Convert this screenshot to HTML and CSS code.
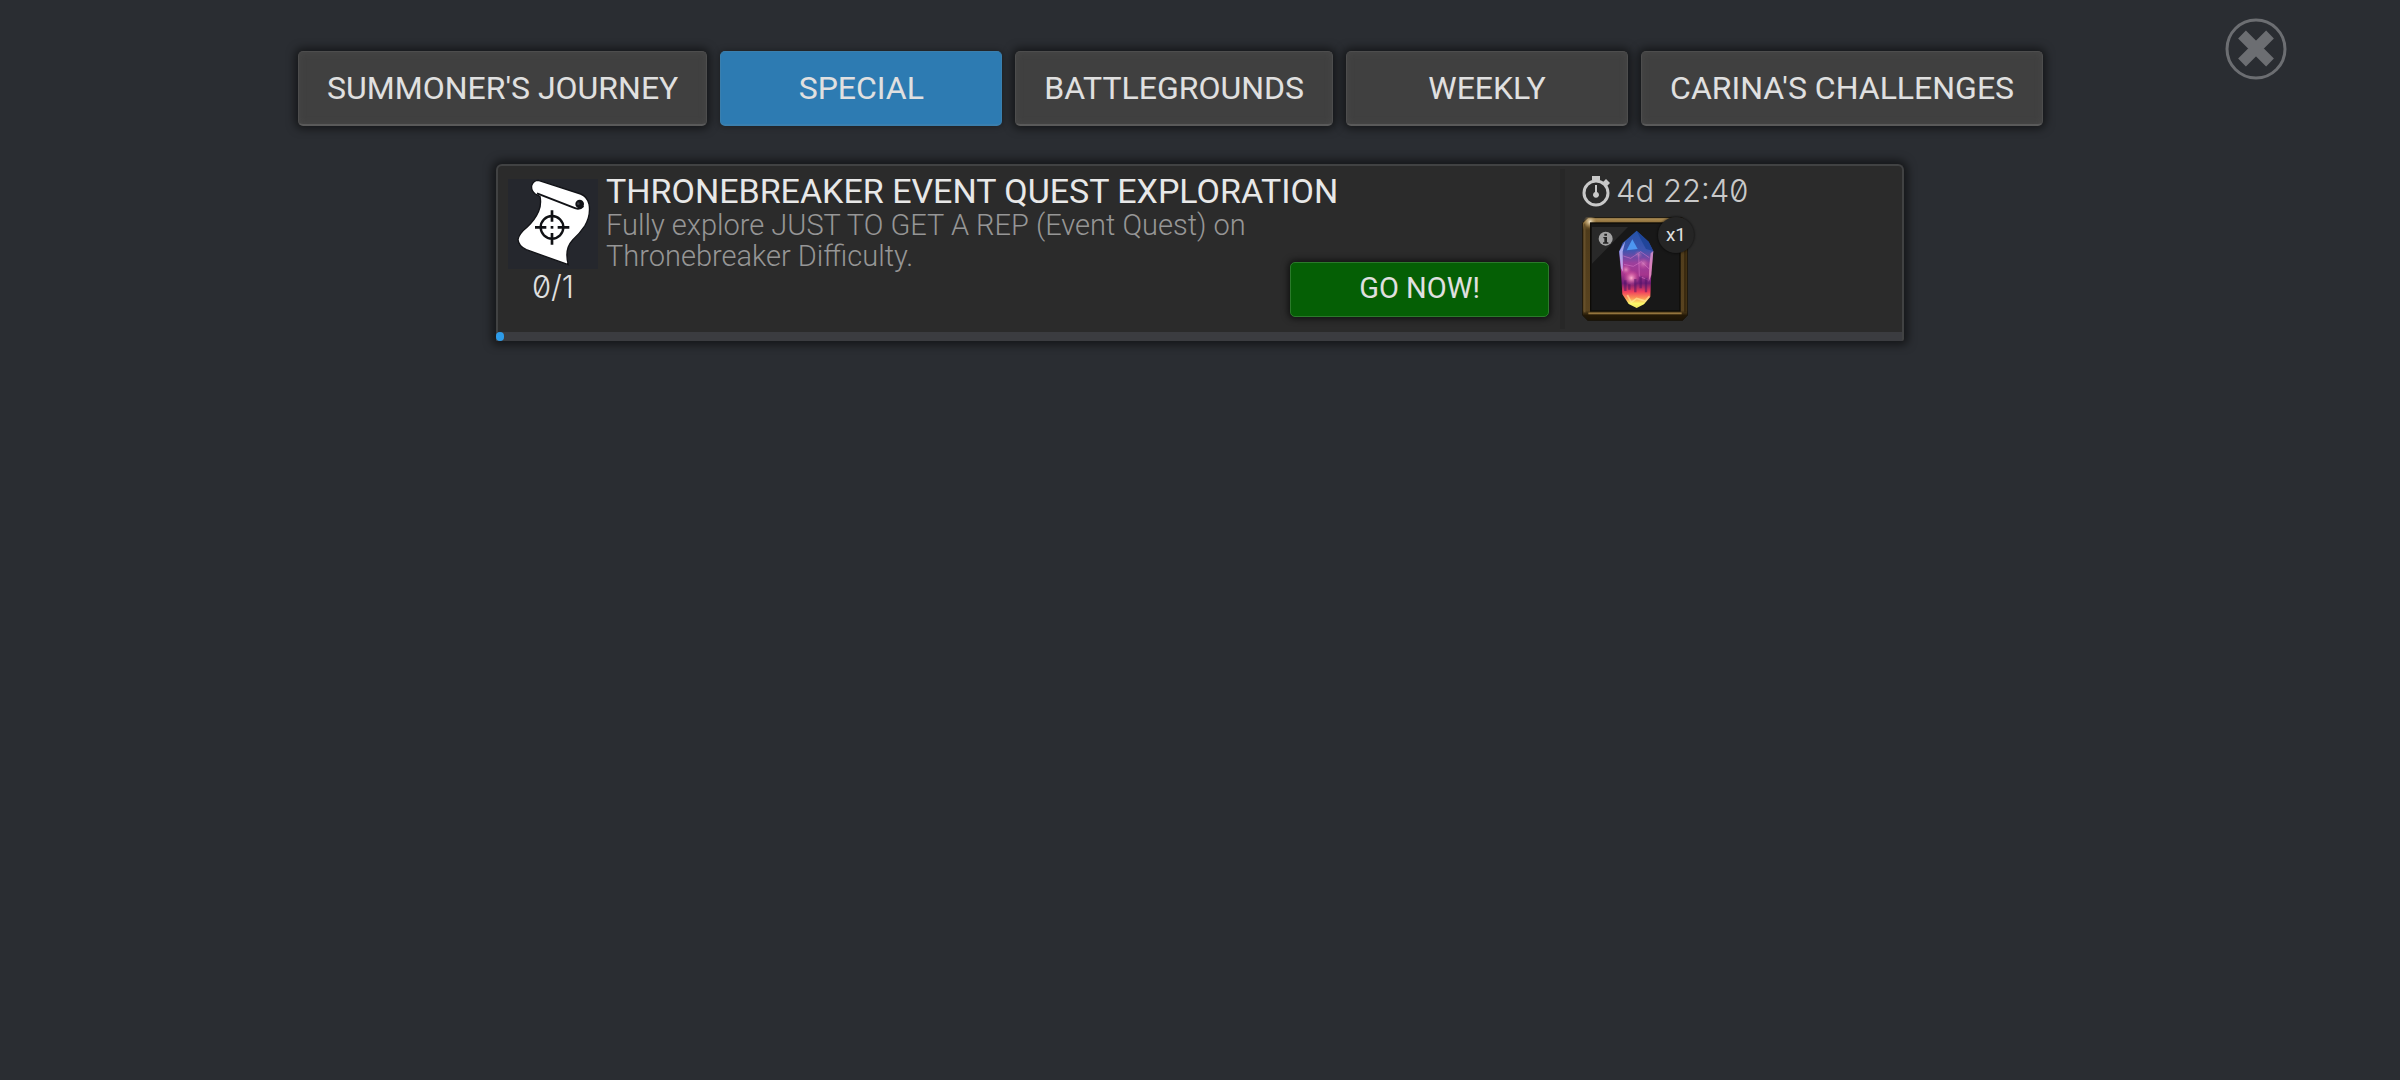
FILE: index.html
```html
<!DOCTYPE html>
<html lang="en">
<head>
<meta charset="utf-8">
<meta name="viewport" content="width=device-width, initial-scale=1">
<title>Objectives</title>
<link rel="stylesheet" href="styles.css">
</head>
<body>
<header class="header">
  <nav class="tabs" aria-label="Objective categories">
    <button class="tab" type="button">SUMMONER'S JOURNEY</button>
    <button class="tab tab-active" type="button" aria-current="true">SPECIAL</button>
    <button class="tab" type="button">BATTLEGROUNDS</button>
    <button class="tab" type="button">WEEKLY</button>
    <button class="tab" type="button">CARINA'S CHALLENGES</button>
  </nav>
  <button class="close" type="button" aria-label="Close">
    <svg viewBox="0 0 62 62" aria-hidden="true">
      <circle cx="31" cy="31" r="29" fill="none" stroke="#6c6e72" stroke-width="3"/>
      <path d="M17 17 L45 45 M45 17 L17 45" transform="translate(0 -0.5)" fill="none" stroke="#6c6e72" stroke-width="11"/>
    </svg>
  </button>
</header>
<main class="objectives">
  <article class="card">
    <div class="card-body">
      <div class="status">
        <svg class="scroll-icon" viewBox="25 43 270 270" aria-hidden="true">
          <path d="M116 47 L243 88 Q262 95 268 118 Q274 152 255 184 Q242 204 219 226 Q193 254 206 300 L80 255 Q57 245 55 225 Q58 207 82 188 Q106 166 117 140 Q126 118 121 95 L107 88 Q94 79 96 63 Q101 47 116 47Z" fill="#fff" stroke="#121317" stroke-width="4"/>
          <path d="M112 86 L222 129 Q240 137 251 124" fill="none" stroke="#111216" stroke-width="6"/>
          <circle cx="240" cy="118" r="13" fill="#111216"/>
          <circle cx="236" cy="117" r="4" fill="#3a3c42"/>
          <g fill="none" stroke="#101114">
            <circle cx="157" cy="188" r="34" stroke-width="7"/>
            <path d="M157 137 V171 M157 205 V240 M106 188 H140 M174 188 H209" stroke-width="8"/>
            <path d="M153 188 H161" stroke-width="8"/>
          </g>
        </svg>
        <span class="count">0/1</span>
      </div>
      <div class="details">
        <div class="copy">
          <h1 class="title">THRONEBREAKER EVENT QUEST EXPLORATION</h1>
          <p class="description">Fully explore JUST TO GET A REP (Event Quest) on Thronebreaker Difficulty.</p>
        </div>
        <button class="go" type="button">GO NOW!</button>
      </div>
      <div class="rewards">
        <div class="timer">
          <svg class="timer-icon" viewBox="0 0 28 31" aria-hidden="true">
            <circle cx="14" cy="17" r="12" fill="none" stroke="#c9c9c9" stroke-width="3"/>
            <path d="M10 0 H18 V4 H16 V6 H12 V4 H10Z M21 6 L24 3 L28 7 L25 10Z" fill="#c9c9c9"/>
            <path d="M13 9 H15 V16 A3 3 0 1 1 13 16Z" fill="#c9c9c9"/>
          </svg>
          <span>4d 22:40</span>
        </div>
        <div class="reward">
          <svg class="reward-icon" viewBox="36 36 318 312" role="img" aria-label="Crystal">
            <defs>
              <linearGradient id="gold" x1="0" y1="0" x2="0" y2="1">
                <stop offset="0" stop-color="#b3935a"/><stop offset=".05" stop-color="#8a6c39"/>
                <stop offset=".12" stop-color="#4e3b1b"/><stop offset=".9" stop-color="#59431f"/>
                <stop offset=".95" stop-color="#231806"/><stop offset="1" stop-color="#1b1306"/>
              </linearGradient>
              <linearGradient id="crystal" x1="0" y1="0" x2="0" y2="1">
                <stop offset="0" stop-color="#2453a8"/><stop offset=".25" stop-color="#3d55b0"/>
                <stop offset=".42" stop-color="#9c3f9c"/><stop offset=".57" stop-color="#a5358d"/>
                <stop offset=".68" stop-color="#6f1d77"/><stop offset=".79" stop-color="#f03e5e"/>
                <stop offset=".87" stop-color="#fb9256"/><stop offset=".94" stop-color="#fbf76a"/>
                <stop offset="1" stop-color="#f0e860"/>
              </linearGradient>
              <radialGradient id="glow"><stop offset="0" stop-color="#ffb0cf"/><stop offset="1" stop-color="#e84b98" stop-opacity="0"/></radialGradient>
              <radialGradient id="shine"><stop offset="0" stop-color="#f1e4c8"/><stop offset="1" stop-color="#b3935a" stop-opacity="0"/></radialGradient>
            </defs>
            <path d="M54 38 H336 L353 54 V330 L337 347 H54 L37 330 V54Z" fill="url(#gold)" stroke="#1a150c" stroke-width="3"/>
            <path d="M44 56 V322" stroke="#66502b" stroke-width="5"/>
            <path d="M346 56 V322" stroke="#3a2a10" stroke-width="8"/>
            <path d="M55 325 H335" stroke="#94743d" stroke-width="5"/>
            <circle cx="60" cy="50" r="20" fill="url(#shine)"/>
            <rect x="62" y="54" width="268" height="264" fill="#181818" stroke="#0d0b07" stroke-width="4"/>
            <path d="M66 66 H174 L66 176Z" fill="#292929"/>
            <circle cx="107" cy="101" r="21" fill="#a3a3a3"/>
            <path d="M103 86 H111 V92 H103Z M100 96 H111 V112 H115 V116 H99 V112 H103 V100 H100Z" fill="#242424"/>
            <path d="M200 77 L236 110 L250 138 L244 200 L241 275 L222 298 L200 309 L176 297 L157 268 L153 200 L147 140 L158 114Z" fill="url(#crystal)"/>
            <path d="M200 77 L236 110 L250 138 L228 132 L213 104Z" fill="#183f92" opacity=".7"/>
            <path d="M187 103 L203 132 L170 136Z" fill="#4d96f0"/>
            <path d="M148 139 L166 108 L158 140 L159 200 L153 190Z" fill="#c5bfff" opacity=".75"/>
            <path d="M242 145 L250 138 L244 210 L236 230 L238 180Z" fill="#f3a0cd" opacity=".7"/>
            <circle cx="184" cy="219" r="24" fill="url(#glow)"/>
            <circle cx="168" cy="194" r="16" fill="url(#glow)" opacity=".7"/>
            <circle cx="220" cy="176" r="18" fill="url(#glow)" opacity=".5"/>
            <circle cx="206" cy="148" r="13" fill="url(#glow)" opacity=".4"/>
            <path d="M160 153 L182 160 L212 140 L238 158 M162 178 L190 184 L214 170 L238 192 M206 148 L208 214 L232 224" fill="none" stroke="#d878c8" stroke-width="3" opacity=".55"/>
            <path d="M196 222 V262 M212 214 V250 M228 220 V262 M166 226 V258 M178 238 V254" fill="none" stroke="#4c1265" stroke-width="7" opacity=".5"/>
            <path d="M172 270 L184 292 L200 280 L226 288 L238 274" fill="none" stroke="#fff6a0" stroke-width="5" opacity=".55"/>
          </svg>
          <span class="quantity">x1</span>
        </div>
      </div>
    </div>
    <div class="progress" role="progressbar" aria-label="Objective progress" aria-valuemin="0" aria-valuemax="1" aria-valuenow="0">
      <div class="progress-fill" style="width: 0%"></div>
    </div>
  </article>
</main>
</body>
</html>
```
FILE: styles.css
```css
*, *::before, *::after { box-sizing: border-box; }

body {
  margin: 0;
  min-height: 100vh;
  background: #2a2d32;
  color: #e0e0e0;
  font-family: Roboto, "Liberation Sans", sans-serif;
  font-weight: 400;
}

button {
  font: inherit;
  color: inherit;
  cursor: pointer;
}

.header {
  display: flex;
  justify-content: space-between;
  align-items: flex-start;
  padding: 18px 113px 0 298px;
}

.tabs {
  display: flex;
  gap: 13px;
  margin-top: 33px;
}

.tab {
  min-width: 282px;
  height: 75px;
  padding: 0 28px;
  border: 1px solid #4d4d4d;
  border-bottom: 2px solid #5a5a5a;
  border-radius: 5px;
  background: #404040;
  box-shadow: 0 0 8px 3px rgba(0, 0, 0, 0.5), inset 0 0 6px #484848;
  font-size: 32px;
  line-height: 36px;
  white-space: nowrap;
}

.tab-active {
  border-color: #3a7fae;
  background: #2d7bb2;
  box-shadow: 0 0 6px 1px rgba(0, 0, 0, 0.3);
}

.close {
  width: 62px;
  height: 62px;
  padding: 0;
  border: 0;
  background: none;
}

.close svg { display: block; }

.objectives {
  max-width: 1408px;
  margin: 38px auto 0;
}

.card {
  border: 2px solid #414243;
  border-bottom: 0;
  border-radius: 6px 6px 2px 2px;
  background: #2b2b2b;
  box-shadow: 0 0 9px 4px rgba(0, 0, 0, 0.5);
}

.card-body {
  display: grid;
  grid-template-columns: 90px 1fr 342px;
  min-height: 166px;
  padding-left: 10px;
}

.status {
  display: flex;
  flex-direction: column;
  align-items: center;
  gap: 2px;
  padding-top: 13px;
}

.scroll-icon {
  width: 90px;
  height: 90px;
  background: #25272d;
}

.count {
  font-family: Inter, sans-serif;
  font-feature-settings: "zero";
  font-size: 31px;
  font-weight: 300;
  line-height: 32px;
}

.details {
  display: flex;
  flex-direction: column;
  justify-content: space-between;
  padding: 7px 11px 15px 8px;
}

/* The copy keeps its own height so the action can sit beside its last line. */
.copy { height: 80px; }

.title {
  margin: 0;
  font-size: 34px;
  font-weight: 400;
  line-height: 37px;
  color: #e8e8e8;
}

.description {
  max-width: 660px;
  margin: 0;
  font-size: 29px;
  font-weight: 300;
  line-height: 31px;
  color: #969696;
}

.go {
  align-self: flex-end;
  width: 259px;
  height: 55px;
  padding: 0 0 3px;
  border: 1px solid #2b7a2b;
  border-radius: 5px;
  background: #055f05;
  box-shadow: 0 0 6px 2px rgba(0, 0, 0, 0.6);
  font-size: 29px;
  line-height: 32px;
}

.rewards {
  margin: 3px 0 3px;
  padding: 4px 0 0 17px;
  border-left: 5px solid #272727;
}

.timer {
  display: flex;
  align-items: center;
  gap: 6px;
  font-family: Inter, sans-serif;
  font-feature-settings: "zero";
  font-size: 31px;
  font-weight: 300;
  line-height: 36px;
  color: #c9c9c9;
}

.timer-icon {
  width: 28px;
  height: 31px;
}

.reward {
  position: relative;
  width: 106px;
  margin-top: 8px;
}

.reward-icon {
  display: block;
  width: 106px;
  height: 104px;
}

.quantity {
  position: absolute;
  top: 0;
  right: -6px;
  width: 36px;
  border-radius: 50%;
  background: #252525;
  box-shadow: 0 0 2px 1px rgba(0, 0, 0, 0.4);
  font-size: 19px;
  line-height: 36px;
  text-align: center;
}

.progress {
  height: 9px;
  margin: 0 0 0 -2px;
  background: #3b3c40;
}

.progress-fill {
  min-width: 8px;
  height: 9px;
  border-radius: 4px;
  background: #2d9be8;
}
```
